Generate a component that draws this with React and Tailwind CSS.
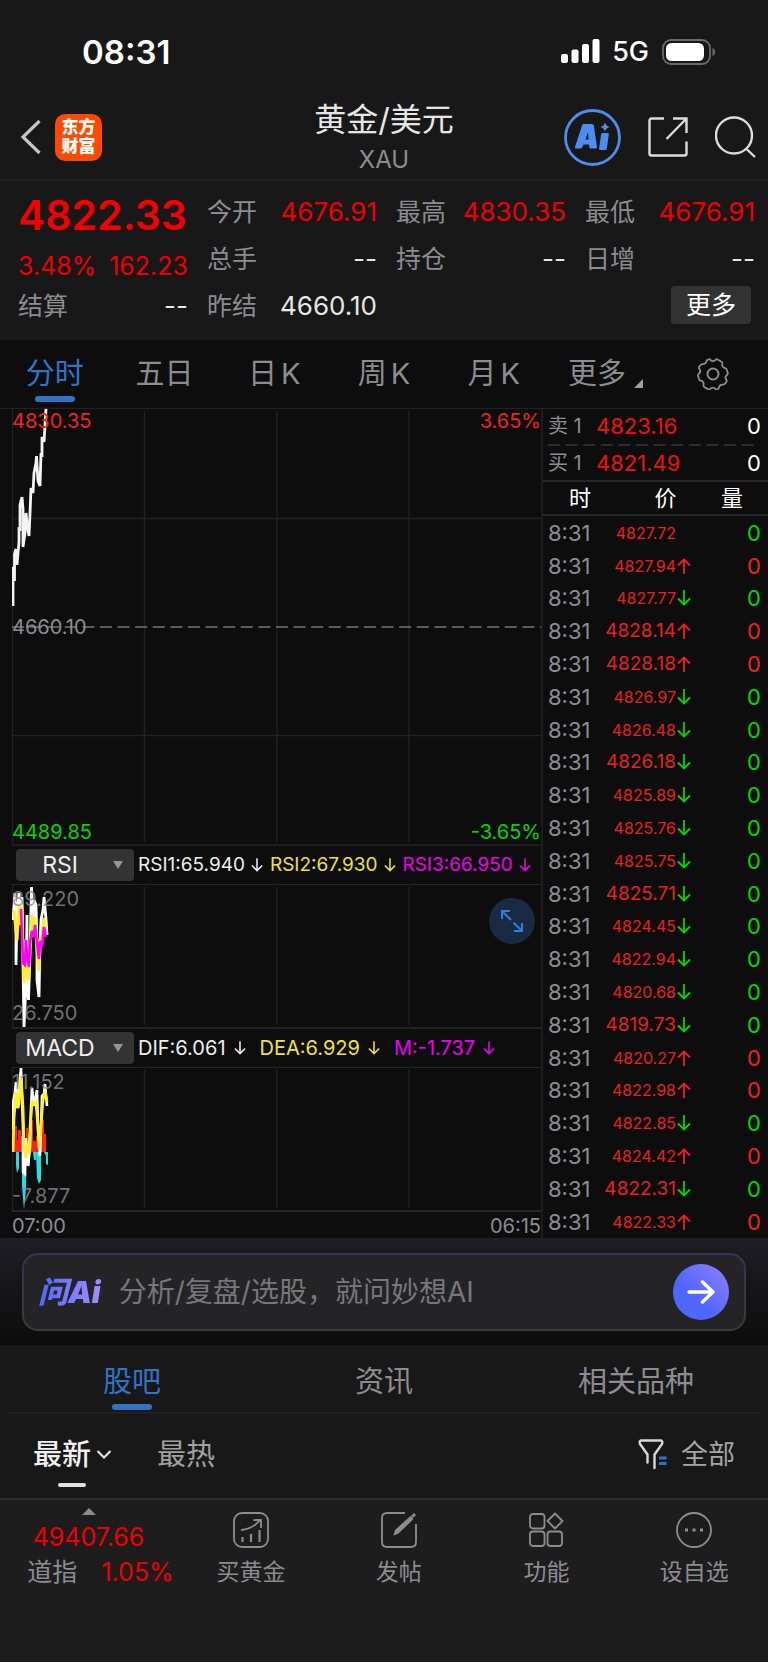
import React from 'react';

const quoteRows = [
  [
    { label: '今开', value: '4676.91', color: 'text-[#ee0000]' },
    { label: '最高', value: '4830.35', color: 'text-[#ee0000]' },
    { label: '最低', value: '4676.91', color: 'text-[#ee0000]' },
  ],
  [
    { label: '总手', value: '--', color: 'text-[#e6e6e6]' },
    { label: '持仓', value: '--', color: 'text-[#e6e6e6]' },
    { label: '日增', value: '--', color: 'text-[#e6e6e6]' },
  ],
];

const periods = ['分时', '五日', '日 K', '周 K', '月 K'];

const trades = [
  ['4827.72', ''],
  ['4827.94', 'up'],
  ['4827.77', 'down'],
  ['4828.14', 'up'],
  ['4828.18', 'up'],
  ['4826.97', 'down'],
  ['4826.48', 'down'],
  ['4826.18', 'down'],
  ['4825.89', 'down'],
  ['4825.76', 'down'],
  ['4825.75', 'down'],
  ['4825.71', 'down'],
  ['4824.45', 'down'],
  ['4822.94', 'down'],
  ['4820.68', 'down'],
  ['4819.73', 'down'],
  ['4820.27', 'up'],
  ['4822.98', 'up'],
  ['4822.85', 'down'],
  ['4824.42', 'up'],
  ['4822.31', 'down'],
  ['4822.33', 'up'],
];

const rsiLegend = [
  { text: 'RSI1:65.940', color: 'text-[#eeeeee]' },
  { text: 'RSI2:67.930', color: 'text-[#f0e040]' },
  { text: 'RSI3:66.950', color: 'text-[#f000f0]' },
];

const macdLegend = [
  { text: 'DIF:6.061', color: 'text-[#eeeeee]' },
  { text: 'DEA:6.929', color: 'text-[#f0e040]' },
  { text: 'M:-1.737', color: 'text-[#f000f0]' },
];

const Arrow = ({ up = false, className = '' }) => (
  <svg
    viewBox="0 0 14 16"
    className={`shrink-0 ${className}`}
    fill="none"
    stroke="currentColor"
    strokeWidth="1.8"
    aria-hidden="true"
  >
    {up ? <path d="M7 16V1.5M1 7.5l6-6 6 6" /> : <path d="M7 0v14.5M1 8.5l6 6 6-6" />}
  </svg>
);

const StatusBar = () => (
  <div className="flex h-[93px] items-center justify-between pt-[10px] pr-[52px] pl-[82px]">
    <span className="text-[33px] leading-10 font-semibold text-white">08:31</span>
    <div className="flex items-center">
      <svg viewBox="0 0 39 25" className="h-[25px] w-[39px]" fill="#fff" aria-hidden="true">
        <rect x="0" y="15" width="7" height="9" rx="2" />
        <rect x="10.5" y="10.5" width="7" height="13.5" rx="2" />
        <rect x="21" y="5" width="7" height="19" rx="2" />
        <rect x="31.5" y="0" width="7" height="24" rx="2" />
      </svg>
      <span className="ml-3 text-[27px] leading-8 font-medium text-white">5G</span>
      <svg viewBox="0 0 54 26" className="ml-[13px] h-[26px] w-[54px]" aria-hidden="true">
        <rect x="1" y="1" width="47" height="24" rx="8" fill="none" stroke="#6b6b6b" strokeWidth="1.8" />
        <rect x="4" y="4" width="38" height="18" rx="5.5" fill="#fff" />
        <path d="M50.5 9c3.6 1.2 3.6 6.8 0 8z" fill="#6b6b6b" />
      </svg>
    </div>
  </div>
);

const Header = () => (
  <header className="grid h-[88px] grid-cols-3 items-center border-b-2 border-[#242424] px-3">
    <div className="flex items-center gap-[14px] pl-2">
      <button type="button" aria-label="返回" className="h-9 w-[21px]">
        <svg viewBox="0 0 21 36" className="h-9 w-[21px]" fill="none" stroke="#c4c4c4" strokeWidth="3.2">
          <path d="M19.5 2L3 18l16.5 16" />
        </svg>
      </button>
      <a
        href="#home"
        className="flex size-[47px] flex-col items-center justify-center rounded-[10px] bg-[#ff4800] text-[17px] leading-[19px] font-black text-white"
      >
        <span>东方</span>
        <span>财富</span>
      </a>
    </div>
    <div className="pt-2 text-center">
      <h1 className="text-[32px] leading-[38px] whitespace-nowrap text-[#e6e6e6]">黄金/美元</h1>
      <p className="text-2xl leading-[42px] text-[#8c8c92]">XAU</p>
    </div>
    <div className="flex items-center justify-end gap-[27px]">
      <button type="button" aria-label="AI" className="size-[57px] shrink-0">
        <svg viewBox="0 0 57 57" className="size-[57px]" fill="#4c8df0">
          <circle cx="28.5" cy="28.5" r="27" fill="none" stroke="#4c8df0" strokeWidth="2.8" />
          <path
            fillRule="evenodd"
            d="M19.5 15h8.500q1.600 0 1.900 1.600l3.100 21.400q.1 1.500-1.400 1.500h-4.800q-1.300 0-1.500-1.300l-.3-2.700h-5.500l-1.200 2.800q-.5 1.200-1.800 1.200h-4.500q-1.500 0-1-1.500l7-21.400q.5-1.600 1.500-1.600zM24 23.500l-2.500 7h3.200z"
          />
          <path d="M38.5 24h5.200q1.300 0 1.100 1.300l-2 14.500q-.2 1.300-1.500 1.300h-5.100q-1.300 0-1.100-1.300l2-14.500q.2-1.300 1.400-1.300z" />
          <path d="M41 13.500q1 3.500 4.500 4.500-3.500 1-4.500 4.500-1-3.500-4.500-4.500 3.500-1 4.500-4.500z" />
        </svg>
      </button>
      <button type="button" aria-label="分享" className="size-10 shrink-0">
        <svg viewBox="0 0 40 40" className="size-10" fill="none" stroke="#dcdcdc" strokeWidth="2.4">
          <path d="M16 1.5H3.500q-2 0-2 2v33q0 2 2 2h33q2 0 2-2V24.500" />
          <path d="M25 1.5h13.500v14.500M38 2L18.500 22" />
        </svg>
      </button>
      <button type="button" aria-label="搜索" className="h-[42px] w-[41px] shrink-0">
        <svg viewBox="0 0 41 42" className="h-[42px] w-[41px]" fill="none" stroke="#dcdcdc" strokeWidth="2.4">
          <circle cx="19" cy="19.5" r="18" />
          <path d="M31.5 33L40 41" />
        </svg>
      </button>
    </div>
  </header>
);

const QuoteCell = ({ label, value, color }) => (
  <div className="flex h-8 items-center justify-between">
    <span className="text-[25px] text-[#8c8c92]">{label}</span>
    <span className={color}>{value}</span>
  </div>
);

const Quote = () => (
  <section className="grid h-[159px] grid-cols-4 gap-x-[19px] pt-[15px] pr-[13px] pl-[18px] text-[26px] leading-8">
    <div>
      <div className="h-[38px] text-[41px] leading-[38px] font-semibold text-[#f50000]">4822.33</div>
      <div className="mt-4 flex h-8 justify-between text-[25px] text-[#ee0000]">
        <span>3.48%</span>
        <span>162.23</span>
      </div>
      <div className="mt-2">
        <QuoteCell label="结算" value="--" color="text-[#e6e6e6]" />
      </div>
    </div>
    {[0, 1, 2].map((col) => (
      <div key={col} className="flex flex-col gap-[15px]">
        <QuoteCell {...quoteRows[0][col]} />
        <QuoteCell {...quoteRows[1][col]} />
        {col === 0 && <QuoteCell label="昨结" value="4660.10" color="text-[#e6e6e6]" />}
        {col === 2 && (
          <button
            type="button"
            className="-mt-1 mr-1 flex h-[38px] w-20 items-center justify-center self-end rounded bg-[#333333] text-[25px] text-white"
          >
            更多
          </button>
        )}
      </div>
    ))}
  </section>
);

const PeriodTabs = () => (
  <nav className="grid h-[68px] grid-cols-7 bg-[#0d0d0d] text-[29px] leading-[68px] text-[#8c8c92]">
    {periods.map((name, i) => (
      <button
        key={name}
        type="button"
        className={`flex flex-col items-center ${i === 0 ? 'text-[#2f74c8]' : ''}`}
      >
        <span className="flex h-14 gap-1">
          {name.split(' ').map((part) => (
            <span key={part}>{part}</span>
          ))}
        </span>
        {i === 0 && <span className="h-[6px] w-10 rounded-full bg-[#2f74c8]" />}
      </button>
    ))}
    <button type="button" className="flex justify-center gap-2 pl-1">
      <span>更多</span>
      <svg viewBox="0 0 9 9" className="mt-[39px] size-[9px]" fill="#a0a0a4" aria-hidden="true">
        <path d="M9 0v9H0z" />
      </svg>
    </button>
    <button type="button" aria-label="设置" className="flex items-center justify-center">
      <svg viewBox="0 0 32 32" className="size-8" fill="none" stroke="#8c8c92" strokeWidth="1.8">
        <path d="M11.5 1.500q1.200-.6 2 .4 2.500 2.400 5 0 .8-1 2-.4l4 2.300q1.200.7.900 2-.8 3.400 2.600 4.400 1.500.3 1.800 1.500l1 3.300q.2 1-.8 2-2.600 2-.6 5 .7 1.200-.3 2.300-1.600 2.500-3 2.400-3.500-.2-4 2.600-.2 1.400-1.400 1.900-1.600 1-2.400-.3-2.300-2.600-5 0-.9 1-2 .4l-4-2.300q-1-.7-.8-2 .6-3.600-2.700-4.300-1.400-.3-1.700-1.500l-1.100-3.400q-.2-1.200.8-2 2.700-2.300.5-5-.8-1.200.1-2.300 1.500-2.600 3.200-2.400 3.300.1 3.900-2.700.2-1.300 1-1.600z" />
        <circle cx="16" cy="16" r="5.5" strokeWidth="2" />
      </svg>
    </button>
  </nav>
);

const GridLines = ({ height }) => (
  <g stroke="#222222" strokeWidth="1.4">
    <path d={`M.5 0V${height}M132.500 2V${height - 2}M265 2V${height - 2}M397 2V${height - 2}`} />
  </g>
);

const PriceChart = () => (
  <div className="relative h-[437px] border-b-2 border-[#1c1c1c] text-[20px] leading-6">
    <svg viewBox="0 0 529 435" preserveAspectRatio="none" className="size-full" fill="none">
      <GridLines height={435} />
      <path d="M0 109.500H529M0 326.500H529" stroke="#222222" strokeWidth="1.4" />
      <path d="M0 218H529" stroke="#77777c" strokeWidth="1.4" strokeDasharray="12 5.600" />
      <path
        d="M1 197V158L2.500 172V145L4 140L5 156L7 133V118L8 122V96L10 88L11 100V138L13 124L14 104L15 114L17 127L18 105L19 79L21 84L22 64L24 54L24.500 47L26 72L28 77L29 44L30 48V28L32 33L34 0"
        stroke="#f4f4f4"
        strokeWidth="2.8"
      />
    </svg>
    <span className="absolute top-0 left-0 text-[#f02222]">4830.35</span>
    <span className="absolute top-0 right-0 text-[#f02222]">3.65%</span>
    <span className="absolute top-[206px] left-0 text-[#8c8c92]">4660.10</span>
    <span className="absolute bottom-0 left-0 text-[#00d800]">4489.85</span>
    <span className="absolute right-0 bottom-0 text-[#00d800]">-3.65%</span>
  </div>
);

const IndicatorBar = ({ value, options, legend, className, itemClassName }) => (
  <div className="flex h-[39px] items-center border-b border-[#262626] pl-1">
    <div className="relative h-8 w-[118px] shrink-0">
      <select
        aria-label="指标"
        defaultValue={value}
        className="size-full appearance-none rounded bg-[#333333] pr-[30px] text-center text-[23px] leading-8 text-[#eeeeee]"
        style={{ textAlignLast: 'center' }}
      >
        {options.map((o) => (
          <option key={o}>{o}</option>
        ))}
      </select>
      <svg viewBox="0 0 10 8" className="pointer-events-none absolute top-3 right-[11px] h-2 w-[10px]" fill="#96969a">
        <path d="M0 0h10L5 8z" />
      </svg>
    </div>
    <div className={`ml-1 flex leading-6 whitespace-nowrap ${className}`}>
      {legend.map((item) => (
        <span key={item.text} className={`flex items-center ${itemClassName} ${item.color}`}>
          {item.text}
          <Arrow className="h-[14px] w-3" />
        </span>
      ))}
    </div>
  </div>
);

const RsiChart = () => (
  <div className="relative h-[144px] border-b-2 border-[#222222] text-[20px] leading-6">
    <svg viewBox="0 0 529 142" preserveAspectRatio="none" className="size-full" fill="none">
      <GridLines height={142} />
      <path
        d="M1 35L3 8L4 50V80L5 30L7 8L9 40L10 12L11 80L12 142L14 100L15 30V90L16.500 115L18 70L19.500 2L21 45L22 15L24 20L25 60V95L27 112L28 60L29 35L31 25L32 12L34 34L35 50"
        stroke="#ffffff"
        strokeWidth="2.8"
      />
      <path
        d="M2 25L5 55L7 20L8 40L10 22L11 70L12 98V60L14 55V85L16 95L18 62L20 30L21 48L23 32L25 65L27 86L28 55L30 50L32 33L34 48"
        stroke="#ffee33"
        strokeWidth="3"
      />
      <path
        d="M9 24L10 50L11 78L13 80L14 55L15 70L17 82L18 58L20 46L22 52L23 40L25 58L27 74L28 56L30 62L32 42L34 52"
        stroke="#ff00ff"
        strokeWidth="2.6"
      />
    </svg>
    <span className="absolute top-[2px] left-0 text-[#8c8c92]/80">89.220</span>
    <span className="absolute bottom-[2px] left-0 text-[#8c8c92]/80">26.750</span>
    <button
      type="button"
      aria-label="全屏"
      className="absolute top-[13px] right-[6px] flex size-[46px] items-center justify-center rounded-full bg-[#182b42]"
    >
      <svg viewBox="0 0 22 22" className="size-[22px]" fill="none" stroke="#2f7fd6" strokeWidth="2">
        <path d="M9 1H1v8M1 1l9 9M21 13v8h-8M12.500 12.500L21 21" />
      </svg>
    </button>
  </div>
);

const MacdChart = () => (
  <div className="relative h-[144px] border-b-2 border-[#262626] text-[20px] leading-6">
    <svg viewBox="0 0 529 142" preserveAspectRatio="none" className="size-full" fill="none">
      <GridLines height={142} />
      <path
        d="M1 84V60H3V58H5V72H6V62H9V84zM9 84V68H11V72H14V60H16V66H18V84zM19 84V52H21V73H24V68H26V84zM28 84V58H30V52H32V66H34V84z"
        fill="#ff2020"
      />
      <path
        d="M4 84H7V100L5 105L4 98zM10 84H14V120L12 142L10 118zM15 84H18V98L16 96zM21 84H24V92H22zM24 84H29V112L27 116L25 110zM32 84H36V97L34 96V88z"
        fill="#20e0e0"
      />
      <path
        d="M1 62V35L3 24L4 14L5 40L7 36V20L9 0L11 60V104L13 106L14 70L16 98L18 80L19 40L20 20L22 38L25 22L26 60L28 88L29 60L30 28L32 26L33 16L35 38"
        stroke="#ffffff"
        strokeWidth="2.6"
      />
      <path
        d="M1 84L2 50L4 24L6 40L8 24L9 8L11 40L12 78L14 90L15 76L17 86L18 60L20 34L22 36L24 34L26 60L27 80L29 56L31 32L33 24L35 34"
        stroke="#ffee33"
        strokeWidth="2.8"
      />
    </svg>
    <span className="absolute top-[2px] left-0 text-[#8c8c92]/80">11.152</span>
    <span className="absolute bottom-[2px] left-0 text-[#8c8c92]/80">-7.877</span>
  </div>
);

const BookRow = ({ side, price }) => (
  <div className="flex h-[34px] items-center">
    <span className="w-12 text-[20px] text-[#8c8c92]">{side}</span>
    <span className="text-[#f01010]">{price}</span>
    <span className="ml-auto text-white">0</span>
  </div>
);

const OrderPanel = () => (
  <aside className="flex w-[227px] shrink-0 flex-col border-l-2 border-[#1c1c1c]">
    <div className="pr-[7px] pl-[5px] text-[22px] leading-7">
      <BookRow side="卖 1" price="4823.16" />
      <svg className="mt-px block h-[2px] w-full" aria-hidden="true">
        <path d="M0 1H210" stroke="#2c2c2c" strokeWidth="2" strokeDasharray="12 5.600" />
      </svg>
      <BookRow side="买 1" price="4821.49" />
    </div>
    <table className="w-full flex-1 border-t-2 border-[#262626]">
      <thead>
        <tr className="h-[34px] border-b-2 border-[#262626] text-[22px] leading-7 text-white">
          <th className="w-[48px] pl-[26px] text-center font-normal">时</th>
          <th className="pl-[26px] text-center font-normal">价</th>
          <th className="w-[54px] pr-[18px] text-center font-normal">量</th>
        </tr>
      </thead>
      <tbody>
        {trades.map(([price, dir]) => (
          <tr key={price}>
            <td className="pl-[5px] text-[22px] leading-6 text-[#8c8c92]">8:31</td>
            <td className="pr-[22px]">
              <span className="flex items-center justify-end">
                <span className={`leading-6 text-[#e82020] ${price.includes('1') ? 'text-[19px]' : 'text-[16px]'}`}>
                  {price}
                </span>
                <span className="w-4">
                  {dir && (
                    <Arrow
                      up={dir === 'up'}
                      className={`ml-[1px] h-4 w-[14px] ${dir === 'up' ? 'text-[#f02020]' : 'text-[#00d800]'}`}
                    />
                  )}
                </span>
              </span>
            </td>
            <td
              className={`pr-[7px] text-right text-[22px] leading-6 ${dir === 'up' ? 'text-[#f02020]' : 'text-[#00d800]'}`}
            >
              0
            </td>
          </tr>
        ))}
      </tbody>
    </table>
  </aside>
);

const AskBar = () => (
  <section className="bg-linear-to-b from-[#1f1e26] to-[#0c0c0c] px-[22px] pt-[15px] pb-[14px]">
    <div className="rounded-[16px] bg-linear-to-b from-[#34355a] to-[#3c3937] p-[2px]">
      <form className="flex h-[74px] items-center rounded-[14px] bg-[#242426] pr-[15px] pl-[14px]">
        <span className="shrink-0 bg-linear-to-r from-[#4f66ff] to-[#a590ff] bg-clip-text pr-1 text-[30px] leading-10 font-black text-transparent italic">
          问Ai
        </span>
        <input
          type="text"
          aria-label="问AI"
          placeholder="分析/复盘/选股，就问妙想AI"
          className="ml-[14px] min-w-0 flex-1 bg-transparent text-[28px] leading-10 text-white outline-none placeholder:text-[#77777b]"
        />
        <button
          type="button"
          aria-label="发送"
          className="flex size-14 shrink-0 items-center justify-center rounded-full bg-linear-to-tr from-[#4f66ff] from-40% to-[#9080ff]"
        >
          <svg
            viewBox="0 0 28 24"
            className="h-6 w-7"
            fill="none"
            stroke="#fff"
            strokeWidth="3.4"
            strokeLinecap="round"
            strokeLinejoin="round"
          >
            <path d="M2 12h24M15.500 2l10.500 10-10.500 10" />
          </svg>
        </button>
      </form>
    </div>
  </section>
);

const CommunityTabs = () => (
  <nav className="mx-[6px] grid h-[69px] grid-cols-3 border-b-2 border-[#202022] text-[29px] text-[#8c8c92]">
    {['股吧', '资讯', '相关品种'].map((name, i) => (
      <button key={name} type="button" className={`flex flex-col items-center ${i === 0 ? 'text-[#2f74c8]' : ''}`}>
        <span className="h-[59px] leading-[74px]">{name}</span>
        {i === 0 && <span className="h-[6px] w-10 rounded-full bg-[#2f74c8]" />}
      </button>
    ))}
  </nav>
);

const SortBar = () => (
  <div className="flex h-[84px] px-[33px] text-[29px] leading-[82px]">
    <button type="button" className="flex flex-col items-center text-[#f0f0f0]">
      <span className="flex h-[69px] items-start gap-[6px] font-medium">
        最新
        <svg viewBox="0 0 14 9" className="mt-[36px] h-[9px] w-[14px]" fill="none" stroke="#e6e6e6" strokeWidth="2">
          <path d="M.5 1L7 7.500 13.500 1" />
        </svg>
      </span>
      <span className="h-1 w-7 rounded-full bg-[#e0e0e0]" />
    </button>
    <button type="button" className="ml-[46px] flex items-start text-[#a0a0a0]">
      最热
    </button>
    <button type="button" className="ml-auto flex items-start gap-[14px] text-[27px] text-[#a6a6a6]">
      <svg
        viewBox="0 0 29 31"
        className="mt-[25px] h-[31px] w-[29px]"
        fill="none"
        stroke="#d8d8d8"
        strokeWidth="2.4"
        strokeLinecap="round"
        strokeLinejoin="round"
      >
        <path d="M9.500 23.500v-8L2 5q-1-3 1-3.500h20q2 .5 1 3.500l-7.500 10.500V29" />
        <path d="M21 19h7.500M21 24.500h7.500" stroke="#2f74c8" strokeWidth="2.8" strokeLinecap="butt" />
      </svg>
      全部
    </button>
  </div>
);

const navItems = [
  {
    label: '买黄金',
    icon: (
      <>
        <rect x="1" y="1" width="34" height="34" rx="8" />
        <path d="M8 18q12-1 19-10M20.500 8H28v8" />
        <path d="M9.500 25v5M18 22v8M26.500 18v12" strokeWidth="2.2" />
      </>
    ),
  },
  {
    label: '发帖',
    icon: (
      <>
        <path d="M24 1H6Q1 1 1 6v24q0 5 5 5h24q5 0 5-5V12" />
        <path d="M13 23l1.500-5L29.500 4.500l2.500 2.500-14.500 14z" fill="currentColor" strokeWidth="1" />
        <path d="M31.500 2.500l2 2" strokeWidth="4" />
      </>
    ),
  },
  {
    label: '功能',
    icon: (
      <>
        <rect x="2" y="2" width="14.5" height="14.5" rx="3" />
        <rect x="2" y="19.5" width="14.5" height="14.5" rx="3" />
        <rect x="19.5" y="19.5" width="14.5" height="14.5" rx="3" />
        <path d="M27 1.500l7.500 7.500-7.500 7.500-7.500-7.500z" strokeLinejoin="round" />
      </>
    ),
  },
  {
    label: '设自选',
    icon: (
      <>
        <circle cx="18" cy="18" r="17" />
        <path d="M10.500 16.500v3M18 16.500v3M25.500 16.500v3" strokeWidth="3" />
      </>
    ),
  },
];

const BottomNav = () => (
  <nav className="flex h-[164px] border-t-2 border-[#2e2e2e] bg-[#1d1d1d] text-[23px] leading-8 text-[#8c8c92]">
    <button type="button" className="flex w-[177px] shrink-0 flex-col items-center pt-2 text-[25px] leading-8">
      <svg viewBox="0 0 14 7" className="h-[7px] w-[14px]" fill="#8c8c92" aria-hidden="true">
        <path d="M7 0l7 7H0z" />
      </svg>
      <span className="mt-[6px] text-[#ee0000]">49407.66</span>
      <span className="mt-[3px] flex items-center gap-6 pl-6">
        <span>道指</span>
        <span className="text-[#ee0000]">1.05%</span>
      </span>
    </button>
    <div className="grid flex-1 grid-cols-4">
      {navItems.map(({ label, icon }) => (
        <button key={label} type="button" className="flex flex-col items-center pt-3">
          <svg viewBox="0 0 36 36" className="size-9" fill="none" stroke="currentColor" strokeWidth="1.8" aria-hidden="true">
            {icon}
          </svg>
          <span className="mt-2">{label}</span>
        </button>
      ))}
    </div>
  </nav>
);

const App = () => {
  return (
    <div className="bg-[#181818] font-['Inter','Noto_Sans_CJK_SC',sans-serif]">
      <StatusBar />
      <Header />
      <Quote />
      <PeriodTabs />
      <main className="flex border-t border-[#222222] bg-[#0d0d0d]">
        <div className="min-w-0 flex-1 pl-3">
          <PriceChart />
          <IndicatorBar
            value="RSI"
            options={['RSI', 'KDJ']}
            legend={rsiLegend}
            className="gap-[7px] text-[19px]"
            itemClassName="gap-[6px]"
          />
          <RsiChart />
          <IndicatorBar
            value="MACD"
            options={['MACD', 'BOLL']}
            legend={macdLegend}
            className="gap-[14px] text-[20px]"
            itemClassName="gap-2"
          />
          <MacdChart />
          <div className="flex h-[26px] justify-between text-[20px] leading-7 text-[#8c8c92]">
            <span>07:00</span>
            <span>06:15</span>
          </div>
        </div>
        <OrderPanel />
      </main>
      <AskBar />
      <CommunityTabs />
      <SortBar />
      <BottomNav />
    </div>
  );
};

export default App;
